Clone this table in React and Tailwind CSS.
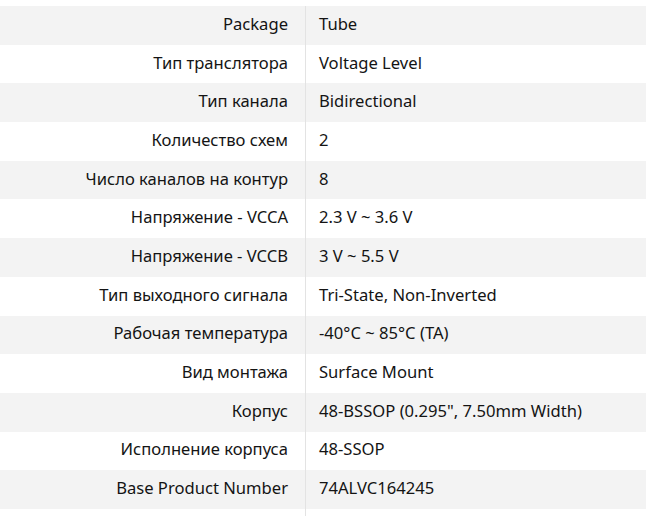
const rows = [
    ['Package', 'Tube'],
    ['Тип транслятора', 'Voltage Level'],
    ['Тип канала', 'Bidirectional'],
    ['Количество схем', '2'],
    ['Число каналов на контур', '8'],
    ['Напряжение - VCCA', '2.3 V ~ 3.6 V'],
    ['Напряжение - VCCB', '3 V ~ 5.5 V'],
    ['Тип выходного сигнала', 'Tri-State, Non-Inverted'],
    ['Рабочая температура', '-40°C ~ 85°C (TA)'],
    ['Вид монтажа', 'Surface Mount'],
    ['Корпус', '48-BSSOP (0.295", 7.50mm Width)'],
    ['Исполнение корпуса', '48-SSOP'],
    ['Base Product Number', '74ALVC164245'],
];

const App = () => {
    return (
        <div className="w-[646px] h-[516px] bg-white pt-[6px] text-[16.6px] text-[#141414] font-['Noto_Sans',sans-serif]">
            <div className="flex flex-col">
                {rows.map(([label, value], i) => (
                    <div
                        key={label}
                        className={`flex h-[38.7px] items-center ${i % 2 === 0 ? 'bg-[#f3f3f3]' : 'bg-white'}`}>
                        <div className="w-[306px] h-full flex items-center justify-end pr-[17px] pb-[2px] border-r border-[#e3e3e3]">
                            {label}
                        </div>
                        <div className="flex-1 pl-[13px] pb-[2px]">{value}</div>
                    </div>
                ))}
                <div className="flex h-[8px]">
                    <div className="w-[306px] border-r border-[#e3e3e3]" />
                </div>
            </div>
        </div>
    );
};

export default App;
